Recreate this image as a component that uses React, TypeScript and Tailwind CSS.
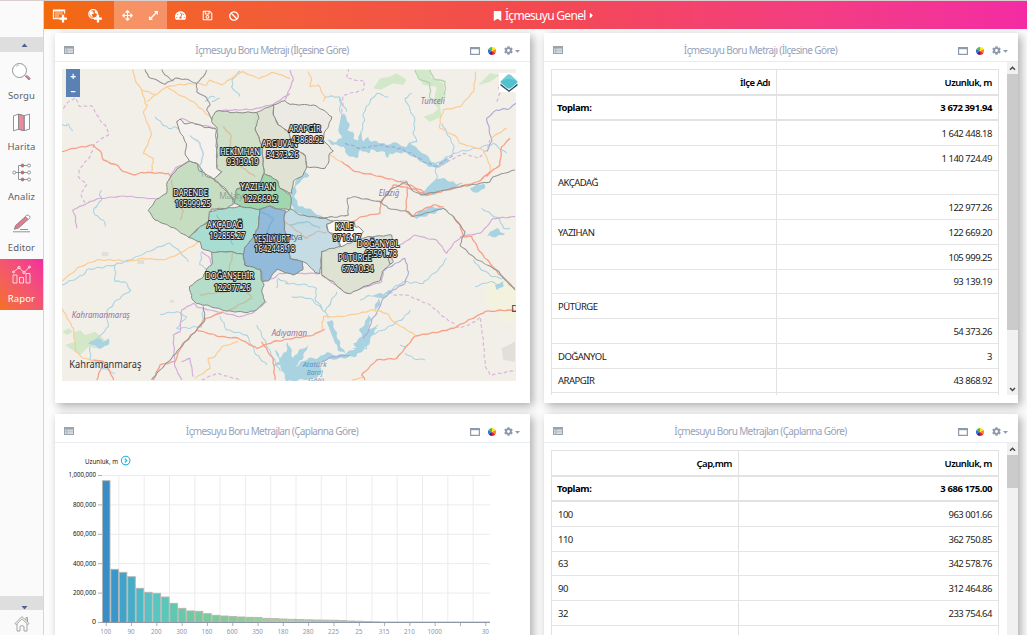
import React from "react";
import { FaTachometerAlt, FaRegSave, FaBan, FaArrowsAlt, FaBookmark, FaCog, FaCaretRight } from "react-icons/fa";

const FONT = "font-['Noto_Sans','Open_Sans',sans-serif]";

function PlusBadge() {
  return <path d="M11 6.800v7.800M7.100 10.700h7.800" stroke="#fff" strokeWidth="2.300" fill="none" />;
}

function AddTableIcon() {
  return (
    <svg width="16" height="15" viewBox="0 0 16 15">
      <path d="M1.5 3v7.5h5.5M1 2.2h11.6v3.6" stroke="#ffe9d8" strokeWidth="1.3" fill="none" />
      <path d="M3 3.6h7.6v3.2H7v3H3z" fill="#ffd3b0" opacity=".55" />
      <path d="M1 2.6h11.6" stroke="#fff" strokeWidth="1.6" />
      <PlusBadge />
    </svg>
  );
}

function AddGlobeIcon() {
  return (
    <svg width="16" height="15" viewBox="0 0 16 15">
      <circle cx="6.2" cy="6" r="4.4" stroke="#fff" strokeWidth="1.2" fill="none" />
      <path d="M3 3l3 .5 1 2-2.5 1L6 9l-2-.5-1.6-3zM8 2l2.4 2-.6 2-2-1z" fill="#fff" />
      <PlusBadge />
    </svg>
  );
}

function ExpandIcon() {
  return (
    <svg width="11" height="11" viewBox="0 0 11 11">
      <path d="M2.6 8.4l5.8-5.8" stroke="#fff" strokeWidth="1.4" />
      <path d="M6 1h4v4zM1 6v4h4z" fill="#fff" />
    </svg>
  );
}

function Toolbar() {
  return (
    <header className="flex h-[28px] shrink-0 items-center bg-linear-to-r from-[#f26a0b] via-[#f3494f] to-[#f42ba3] pt-px text-white">
      <div className="flex h-full w-[70px] items-center">
        <div className="ml-[8px] w-[35px]"><AddTableIcon /></div>
        <AddGlobeIcon />
      </div>
      <div className="-mt-px flex h-[28px] w-[53px] items-center justify-around bg-white/30 pt-px">
        <FaArrowsAlt size={11} />
        <ExpandIcon />
      </div>
      <div className="flex h-full w-[80px] items-center justify-around">
        <FaTachometerAlt size={11} />
        <FaRegSave size={11} />
        <FaBan size={10} />
      </div>
      <div className="ml-[246px] flex items-center">
        <FaBookmark className="h-[10px] w-[9px]" />
        <span className="ml-[3px] text-[12px] tracking-[-0.7px]">İçmesuyu Genel</span>
        <FaCaretRight size={9} className="ml-[1px]" />
      </div>
    </header>
  );
}

const sideIcons: Record<string, React.ReactNode> = {
  Sorgu: (
    <>
      <circle cx="8.5" cy="9.5" r="7" fill="#fff" />
      <path d="M5 5.5a5 5 0 0 1 3-1.4" opacity=".6" />
      <path d="M13.5 14.5l2 1.5" />
      <path d="M14.6 15.6l1.4-1.2 3.3 3.2-1.4 1.4z" fill="#e8788c" />
    </>
  ),
  Harita: (
    <>
      <path d="M2.5 3.8l5-1.6v15l-5 1.6zM7.5 2.2l5.5 1.5v15l-5.5-1.5zM13 3.7l5.5-1.6v15l-5.5 1.6z" fill="#fff" />
      <path d="M7.5 2.2l5.5 1.5v15l-5.5-1.5z" fill="#ee8b99" />
    </>
  ),
  Analiz: (
    <>
      <path d="M4 10.5h13M7.5 3.5v14M7.5 3.5H17M7.5 17.500H17" fill="none" />
      <circle cx="3.200" cy="10.500" r="1.500" fill="#fff" />
      <g fill="#fff"><circle cx="18" cy="3.500" r="1.500" /><circle cx="18" cy="10.500" r="1.500" /><circle cx="18" cy="17.500" r="1.500" /></g>
      <g fill="#e0566e"><circle cx="11.500" cy="3.500" r="1.500" /><circle cx="11.500" cy="10.500" r="1.500" /><circle cx="11.500" cy="17.500" r="1.500" /></g>
    </>
  ),
  Editor: (
    <>
      <path d="M4.500 12.500L14.800 3.300 17.600 6 7.300 15.200 3.300 16.300z" fill="#e8788c" />
      <path d="M14.300 3.600l1.600-1.400q1.400-.5 2.600.8 1 1.300.2 2.200l-1.500 1.300z" fill="#fff" />
      <path d="M2 18.800h17M9 16.500h8" fill="none" />
    </>
  ),
  Rapor: (
    <>
      <path d="M2 11h4v8H2zM8.500 13.500h4V19h-4zM15 9.500h4V19h-4z" fill="none" />
      <path d="M2.500 8L8 3.500l5 5L18.500 3" fill="none" />
      <circle cx="2.500" cy="8" r="1" /><circle cx="8" cy="3.500" r="1.200" /><circle cx="13" cy="8.500" r="1.200" /><circle cx="18.500" cy="3" r="1" />
    </>
  ),
};

function Sidebar() {
  return (
    <nav className="flex h-full w-[44px] shrink-0 flex-col border-r border-[#d6d6d6] bg-[#fafafa]">
      <div className="h-[36px]" />
      <div className="flex h-[15px] items-center justify-center bg-[#dedede] pl-[5px]">
        <svg width="7" height="4" viewBox="0 0 7 4"><path d="M.5 4L3.500.5 6.500 4z" fill="#53608f" /></svg>
      </div>
      <div className="mt-[4px] flex flex-col">
        {Object.keys(sideIcons).map((name) => {
          const on = name === "Rapor";
          return (
            <div
              key={name}
              className={
                on
                  ? "flex h-[51px] flex-col items-center bg-linear-to-tr from-[#f4701a] to-[#f32a9c] pt-[5px] text-white"
                  : "flex h-[50.7px] flex-col items-center pt-[5px] text-[#5b5f66]"
              }
            >
              <svg width="21" height="21" viewBox="0 0 21 21" stroke={on ? "#ffe3ea" : "#85898f"} strokeWidth=".9" fill="none">
                {sideIcons[name]}
              </svg>
              <span className="mt-[7px] text-[9.500px] leading-[13px] tracking-[0.1px]">{name}</span>
            </div>
          );
        })}
      </div>
      <div className="mt-auto flex h-[14px] items-end justify-center bg-[#dedede] pl-[5px]">
        <svg width="7" height="4" viewBox="0 0 7 4"><path d="M.5 0L3.500 3.500 6.500 0z" fill="#53608f" /></svg>
      </div>
      <div className="flex h-[25px] items-center justify-center pt-[2px]">
        <svg width="16" height="17" viewBox="0 0 16 17" stroke="#9a9a9a" strokeWidth=".9" fill="none">
          <path d="M1 8.500L8 1.500l7 7-1.200 1L8 3.800 2.200 9.500zM3 9v7h3v-4.500q2-2 4 0V16h3V9M12 5V2.500h1.500V7" />
        </svg>
      </div>
    </nav>
  );
}

function Card({ title, children }: { title: string; children: React.ReactNode }) {
  return (
    <section className="flex flex-col overflow-hidden bg-white shadow-[3px_3px_9px_rgba(0,0,0,0.32)]">
      <div className="flex h-[29px] shrink-0 items-center border-b border-[#e9edf3] pl-[9px] pr-[10px] pt-[5px]">
        <svg width="10" height="8" viewBox="0 0 10 8">
          <path d="M0 0h10v8H0z" fill="#99a4ad" />
          <path d="M1 2.500h1.500V7H1zM3.300 2.500H9V7H3.300z" fill="#d5dbe0" />
          <path d="M1 4.700h8" stroke="#a9b3bb" strokeWidth=".6" />
        </svg>
        <h2 className="flex-1 text-center text-[10px] leading-[14px] tracking-[-0.62px] text-[#98a2ba]">{title}</h2>
        <svg width="10" height="8" viewBox="0 0 10 8" className="mt-[2px]">
          <path d="M.6.6h8.800v6.800H.6z" stroke="#8e9aab" strokeWidth="1.200" fill="#fff" />
          <path d="M0 1.200h10" stroke="#8e9aab" strokeWidth="2" />
        </svg>
        <svg width="8" height="8" viewBox="0 0 8 8" className="ml-[8px] mt-[3px]">
          <path d="M4 4V0a4 4 0 0 1 3.500 2z" fill="#f8e71c" />
          <path d="M4 4l3.500-2a4 4 0 0 1 0 4z" fill="#fb8b1e" />
          <path d="M4 4l3.500 2A4 4 0 0 1 4 8z" fill="#e5252a" />
          <path d="M4 4v4A4 4 0 0 1 .5 6z" fill="#4a2290" />
          <path d="M4 4L.5 6a4 4 0 0 1 0-4z" fill="#2e6fd0" />
          <path d="M4 4L.5 2A4 4 0 0 1 4 0z" fill="#58b947" />
        </svg>
        <FaCog size={9} className="ml-[8px] mt-[2px] text-[#8e9aab]" />
        <svg width="5" height="3" viewBox="0 0 5 3" className="ml-[2px] mt-[3px]"><path d="M0 0h5L2.500 2.700z" fill="#8e9aab" /></svg>
      </div>
      {children}
    </section>
  );
}

const districts: [string, string][] = [
  ["#f4f1ef", "350,170 360,162 372,176 400,174 440,188 467,190 472,310 485,320 462,343 430,322 415,298 388,288 376,270 379,235 358,196"],
  ["#ece9e4", "640,120 675,107 690,118 760,120 790,135 815,155 806,182 792,205 790,225 820,258 809,265 805,295 795,310 740,305 735,270 700,250 685,200 655,180 640,150"],
  ["#dfe2d2", "590,142 640,120 640,150 655,180 685,200 700,250 735,270 740,305 730,330 700,348 695,385 660,370 650,345 612,325 605,240 585,190"],
  ["#cfdfc6", "457,155 465,142 480,137 520,143 590,142 597,160 585,190 605,240 612,325 600,355 560,365 530,372 524,415 515,395 490,365 462,343 485,320 470,310 472,190 455,170"],
  ["#c4dbbd", "388,288 410,295 418,318 435,325 440,335 462,343 480,360 515,395 520,418 500,430 455,432 445,470 415,490 387,518 340,488 285,465 265,437 290,402 320,385 322,350 350,312"],
  ["#a4dccf", "448,440 500,430 545,425 600,433 596,470 594,490 578,520 556,545 550,569 510,560 455,562 425,550 420,530 387,518 415,490 445,470"],
  ["#9bd5a9", "612,325 650,345 660,370 690,388 694,410 692,432 650,432 630,423 600,433 545,425 524,415 530,372 560,365 600,355"],
  ["#c2dae3", "672,445 692,432 720,450 790,460 820,468 800,478 805,500 830,520 842,545 815,560 785,560 780,625 765,622 745,600 730,590 690,580 670,490"],
  ["#8bb6d9", "600,433 630,423 650,432 675,435 672,465 678,520 690,580 728,590 728,615 700,630 650,613 635,632 625,648 608,650 602,615 555,600 550,569 556,545 578,520 594,490 596,470"],
  ["#fbfaf8", "800,478 830,466 882,469 885,485 895,485 910,500 897,520 905,535 880,540 842,545 830,510 805,500"],
  ["#d8dfd8", "905,520 930,515 995,510 1000,530 985,545 1000,590 990,597 960,560 925,560 897,530"],
  ["#dde1d1", "785,560 815,550 842,545 880,530 900,530 925,560 960,555 985,580 990,597 967,620 962,645 905,668 872,686 850,680 825,655 785,630"],
  ["#b1dbc6", "455,562 510,560 550,569 553,600 600,613 606,650 612,660 605,680 615,708 590,735 565,742 500,738 435,720 410,716 395,700 388,665 405,652 430,635 440,612 457,595"],
];

const rivers = [
  "M285 155 L305 175 325 190 350 187 390 212 420 235 430 270 420 300 428 335",
  "M6 178 20 182 25 178 38 198", "M125 375 L118 390 125 405 102 430 105 450 130 465 135 485", "M455 110 480 100", "M435 110 450 95 465 98",
  "M325 370 335 390 330 410", "M540 18 520 40 515 65 540 95", "M840 95 840 140 850 165", "M794 95 835 95 860 140",
  "M905 200 912 170 910 145 930 110 950 85 985 95", "M1055 85 1035 100 1065 165 1060 200 1070 230 1050 235",
  "M1145 175 L1180 240 1180 265 1125 300 1130 340", "M1180 265 1250 250 1300 235 1340 265", "M1265 430 1320 465 1330 490 1350 490",
  "M6 660 50 640 70 630 80 615 105 610 165 600 220 580 300 545 330 535 360 560 385 590",
  "M165 600 165 650 195 650 212 675 170 705 140 740 145 785 115 820", "M90 845 90 880 115 905 165 925",
  "M300 748 350 740 380 755 350 790 425 785 430 725", "M425 560 420 600 455 620", "M480 755 500 795 560 810 590 870 620 900",
  "M675 655 740 660 770 670 765 700 795 740 805 760", "M695 695 750 700 795 740 830 680", "M900 705 930 692 970 690 1000 670 1030 650 1090 655 1110 635 1135 615 1160 580",
  "M1240 585 1260 610 1300 635 1330 640", "M1245 665 1290 650 1320 660 1330 650", "M700 475 750 485 790 485",
  "M935 810 980 790 1030 760 1050 735", "M955 780 930 800 920 850 880 850", "M590 780 625 850 660 920", "M650 670 655 640 685 655",
  "M1020 840 1040 845", "M1035 865 1060 880 1095 885",
];

const orangeRoads = [
  "M218 13 L225 45 245 75 255 112 262 120 250 145 275 205 260 245 250 265 280 280 275 320", "M260 110 L300 80 320 65 350 60 410 55 440 60 450 45 485 60 545 20 570 30 600 40 640 22 690 40",
  "M245 75 285 88", "M320 65 L350 85 400 110 455 160 490 185 500 195 515 215 505 260 550 310 585 335", "M675 145 720 175 765 155 790 165 815 155",
  "M745 20 755 45 750 65 775 60 795 100 790 110", "M805 265 825 280 845 290", "M1248 20 1240 80 1200 125 1150 135 1140 165 1140 190 1190 215 1200 235 1270 255 1290 300 1290 320",
  "M700 360 680 335 650 330 620 340", "M6 648 60 605 110 585 170 585 200 590 250 580 310 585 350 570 420 530", "M6 730 20 755 40 790 48 860 70 880 130 890",
  "M785 795 790 755 845 755 900 745 940 735 980 745 1000 770 1065 810", "M535 830 485 845 465 875 445 880 450 910 405 940", "M1340 190 1290 220",
  "M875 945 910 938",
];
const redRoads = [
  "M6 260 L40 250 100 240 125 265 130 285 175 303 190 320 225 330 245 322 325 325 335 340",
  "M845 290 885 320 940 330 1020 350 1060 365 1090 380 1100 390", "M1350 220 1325 245 1320 300 1255 350", "M1280 335 1290 320 1255 350 1180 370 1100 390 1060 372 1000 360 985 385 962 410 960 445 905 455 870 475",
  "M1043 365 1037 435 1055 455 1075 440 1120 420 1150 425", "M1180 455 1200 480 1210 515 1235 515 1260 560 1320 630 1365 670",
  "M280 945 300 900 345 890 365 840 410 795 430 765 490 740", "M410 795 480 815 535 820 590 850 640 830 700 820 760 810 795 792",
  "M605 830 640 885 645 945", "M100 885 130 890 150 920 160 945", "M1065 813 1140 800 1180 790 1275 740 1345 735 1368 738", "M1065 813 1010 880 950 885 905 930 915 945", "M130 890 110 945",
];
const greyRoads = [
  "M255 13 265 35 295 48 315 58 345 40 375 42 410 55", "M305 13 315 30 340 48", "M410 55 430 35 440 15", "M410 55 410 80 440 98 450 120 440 135 458 165",
  "M760 460 835 455 865 450 862 400 880 395 965 412 985 430 1045 440 1060 455 1150 430 1175 450 1215 500 1200 540 1245 580 1310 615 1365 675",
  "M960 415 990 375 1040 350 1055 375 1085 390 1200 365 1290 350 1300 335 1365 315", "M430 725 435 765 410 795 350 860 335 880 290 925 275 945",
];
const purple = [
  "M50 490 L45 450 38 435 110 402 190 393 290 402", "M675 105 700 45 690 15", "M425 560 450 580 455 600", "M365 945 345 905 340 810 360 800 365 735 400 715 410 725 450 735 540 755",
  "M540 755 575 745 620 710", "M610 650 640 640 660 625 690 625 745 625 780 625", "M785 630 860 685 920 665 965 650 970 620", "M990 550 1030 535 1065 510 1100 520 1130 525 1160 565 1185 530 1215 510",
  "M365 890 390 880 400 935", "M1200 515 1260 505 1280 485 1300 460 1365 455", "M470 137 580 133 640 118 690 85", "M350 170 365 160 400 175 465 188", "M388 288 345 310 325 345",
];
const dashed = [
  "M10 130 18 118 45 98 60 125 95 122 120 165 135 180 148 207 105 235 90 275 60 310 55 335 80 360 62 385 75 420", "M845 160 850 90 910 75 915 50 860 40 865 13",
  "M1145 300 1210 265 1255 280 1280 255 1290 225", "M1310 110 1320 85 1315 60 1350 50", "M1000 690 1040 690 1110 720 1150 755 1200 790 1245 770 1260 755 1270 830 1275 900 1290 930 1320 925 1368 915",
  "M425 945 470 925 540 945",
];

const lakes = [
  "M842 158 L850 145 860 165 868 175 862 195 878 200 880 220 895 225 900 195 910 230 925 215 935 230 950 228 980 240 1000 232 1020 240 1040 245 1050 230 1075 255 1095 268 1110 285 1130 300 1150 285 1165 280 1160 295 1130 310 1100 300 1060 275 1030 262 990 265 985 280 975 262 930 255 925 265 900 255 890 280 870 275 855 260 850 245 820 240 800 225 830 230 845 220 835 195z",
  "M1130 340 L1145 340 1160 345 1185 355 1210 355 1180 370 1150 375 1120 390 1080 392 1100 368z", "M1230 368 1270 355 1275 370 1255 382 1235 378z",
  "M1060 455 1085 435 1120 425 1145 432 1130 442 1090 455 1070 462z", "M735 318 L748 330 725 345 710 360 705 400 720 425 745 430 790 460 760 460 710 445 692 420 693 385 705 350z",
  "M90 830 110 820 130 830 145 820 145 840 125 850 110 845 85 835z",
  "M642 850 650 858 658 880 668 868 678 862 684 830 695 860 698 880 715 858 740 845 750 838 735 860 725 885 705 905 745 880 765 882 790 870 800 862 830 872 862 862 890 850 880 835 905 815 900 790 915 775 925 750 935 765 922 790 952 790 935 812 930 830 910 855 890 872 850 880 800 885 775 900 785 920 765 940 680 950 668 920 662 900 640 905 658 890 650 870z",
  "M800 770 815 765 830 810 845 850 855 865 840 860 825 835z", "M940 695 955 685 970 690 990 675 1000 680 965 700z", "M940 740 955 700 960 720z",
  "M1290 500 1310 490 1320 500 1335 505 1310 515 1280 515z", "M1305 660 1325 652 1330 665 1310 675z",
];
const forests = [
  "M940 70 960 40 990 35 1010 25 1040 45 1030 60 1000 55 960 75z", "M1065 15 1110 15 1115 40 1150 55 1155 100 1135 130 1120 115 1130 65 1090 60z",
  "M1090 155 1120 145 1140 125 1145 155 1110 170z", "M1255 60 1290 25 1320 30 1290 50z", "M40 805 60 795 75 810 105 800 135 825 110 850 85 845 60 870 15 840 45 830z", "M8 800 25 790 40 800 20 810z",
];

const mapLabels: [string, string, number, number, number, number, number][] = [
  ["HEKİMHAN", "93139.19", 540, 261, 120, 293, 96],
  ["ARGUVAN", "54373.26", 659, 239, 108, 270, 97],
  ["ARAPGİR", "43868.92", 734, 192, 96, 225, 96],
  ["DARENDE", "105999.25", 392, 385, 104, 417, 108],
  ["YAZIHAN", "122669.2", 594, 367, 106, 402, 104],
  ["AKÇADAĞ", "192855.27", 494, 480, 106, 514, 108],
  ["YEŞİLYURT", "1642448.18", 636, 522, 108, 554, 122],
  ["KALE", "9716.17", 853, 487, 55, 521, 84],
  ["DOĞANYOL", "62591.78", 955, 538, 126, 568, 97],
  ["PÜTÜRGE", "67210.34", 885, 580, 100, 614, 95],
  ["DOĞANŞEHİR", "122977.26", 509, 635, 146, 669, 110],
];

function meander(line: string, amount: number) {
  const n = (line.match(/[\d.]+/g) || []).map(Number);
  let d = `M${n[0]} ${n[1]}`;
  let side = 1;
  for (let i = 2; i < n.length; i += 2) {
    const x0 = n[i - 2], y0 = n[i - 1], x1 = n[i], y1 = n[i + 1];
    const len = Math.hypot(x1 - x0, y1 - y0) || 1;
    const parts = Math.max(1, Math.round(len / 16));
    for (let k = 1; k <= parts; k++) {
      const t = k / parts, m = (k - 0.5) / parts;
      const a = amount * side * (0.5 + ((i * 7 + k * 5) % 9) / 9);
      side = -side;
      const cx = x0 + (x1 - x0) * m - ((y1 - y0) / len) * a;
      const cy = y0 + (y1 - y0) * m + ((x1 - x0) / len) * a;
      d += `Q${cx.toFixed(1)} ${cy.toFixed(1)} ${(x0 + (x1 - x0) * t).toFixed(1)} ${(y0 + (y1 - y0) * t).toFixed(1)}`;
    }
  }
  return d;
}

function Lines({ d, stroke, w, dash, bend = 3 }: { d: string[]; stroke: string; w: number; dash?: string; bend?: number }) {
  return <path d={d.map((l) => meander(l, bend)).join(" ")} stroke={stroke} strokeWidth={w} strokeDasharray={dash} fill="none" strokeLinejoin="round" />;
}

function MapView() {
  return (
    <div className="relative ml-[7px] mt-[7px] h-[312px] w-[454px]">
      <svg width="454" height="312" viewBox="6 12 1362 936" className={FONT}>
        <rect x="6" y="12" width="1362" height="936" fill="#f2efe9" />
        <path d={forests.join(" ")} fill="#d3e7c9" />
        <path d="M1280 640h60l28 40v90h-40l-50-60z" fill="#f3f3d8" opacity=".6" />
        <path d="M1325 850l40-20v60l-35-5z M125 560h20v14h-20z M232 585h20v12h-20z M330 705h12v8h-12z M1020 345h22v14h-22z" fill="#e2dfda" />
        <Lines d={rivers} stroke="#a9d3e2" w={3.200} bend={4} />
        <path d={lakes.map((l) => meander(l, 5) + "Z").join(" ")} fill="#a9d3e0" />
        <Lines d={["M855 235 L900 250 960 240 1020 250 1060 270 1100 295 1130 303 1180 270"]} stroke="#9fa9d3" w={3.500} dash="12 6" />
        <Lines d={["M965 620 1000 600 1035 580 1045 620 1035 655 1000 675 970 700 950 745 935 765 925 800 910 820", "M1280 260 1295 230 1280 160 1310 135 1350 130 1368 115", "M785 890 820 875 870 870"]} stroke="#a9acd6" w={3.500} />
        <Lines d={purple} stroke="#d3acd8" w={3.500} bend={2} />
        <Lines d={dashed} stroke="#d8b4db" w={3.500} dash="11 7" bend={2} />
        <Lines d={["M1065 15 1075 40 1110 55 1110 100 1130 110", "M1110 15 1120 40 1155 50 1155 90"]} stroke="#b4d4b0" w={4} />
        <Lines d={orangeRoads} stroke="#fbcb90" w={3.500} bend={2.500} />
        <Lines d={redRoads} stroke="#f7a088" w={4} bend={2.500} />
        <Lines d={greyRoads} stroke="#969696" w={3.200} bend={2.500} />
        {districts.map(([fill, pts], i) => (
          <path key={i} d={meander(pts, 2.500) + "Z"} fill={fill} fillOpacity=".93" stroke="#888a86" strokeWidth="3" strokeLinejoin="round" />
        ))}
        <g opacity=".35">
          <Lines d={["M335 345 340 400 370 440 360 465", "M490 185 515 215 505 260 550 310 585 335", "M675 470 740 520 770 500 800 502", "M420 690 500 680 540 650 575 700 500 740", "M520 560 500 640"]} stroke="#d88a5a" w={4} />
          <Lines d={["M390 212 420 235 430 270 420 300 428 335", "M605 440 640 460 620 500 665 560", "M690 480 740 470 780 490", "M470 450 500 500 520 540"]} stroke="#4f9dbb" w={4} />
        </g>
        <g fontStyle="italic" fill="#9470a3" fontSize="25">
          <text x="1082" y="116" textLength="72" lengthAdjust="spacingAndGlyphs">Tunceli</text>
          <text x="956" y="394" textLength="62" lengthAdjust="spacingAndGlyphs">Elazığ</text>
          <text x="35" y="760" textLength="175" lengthAdjust="spacingAndGlyphs">Kahramanmaraş</text>
          <text x="635" y="814" textLength="106" lengthAdjust="spacingAndGlyphs">Adıyaman</text>
          <g fill="#5f92bd" fontSize="22">
            <text x="728" y="906" textLength="72" lengthAdjust="spacingAndGlyphs">Atatürk</text>
            <text x="740" y="931" textLength="48" lengthAdjust="spacingAndGlyphs">Baraj</text>
            <text x="744" y="955" textLength="48" lengthAdjust="spacingAndGlyphs">Gölü</text>
          </g>
        </g>
        <g fill="#545454">
          <text x="28" y="909" fontSize="31" fill="#333" textLength="216" lengthAdjust="spacingAndGlyphs">Kahramanmaraş</text>
          <text x="478" y="403" fontSize="25" fill="#97a392" textLength="84">Malatya</text>
          <text x="638" y="524" fontSize="28" fill="#68747c" textLength="90">Malatya</text>
          <text x="1354" y="741" fontSize="28" fill="#333">D</text>
        </g>
        <g textAnchor="middle" fontSize="25" fill="#fff" stroke="#222" strokeWidth="6.500" strokeLinejoin="round" style={{ paintOrder: "stroke" }}>
          {mapLabels.map(([name, value, x, y, w, y2, w2]) => (
            <g key={name}>
              <text x={x + (name === "DARENDE" ? 6 : 8)} y={y2 + 8} textLength={w2} lengthAdjust="spacingAndGlyphs">{value}</text>
              <text x={x} y={y + 8} textLength={w} lengthAdjust="spacingAndGlyphs">{name}</text>
            </g>
          ))}
        </g>
      </svg>
      <div className="absolute left-[4px] top-0 flex h-[28px] w-[14px] flex-col items-center justify-around bg-[#5b80b4] text-[10px] font-bold leading-[13px] text-white">
        <span>+</span>
        <span>–</span>
      </div>
      <svg width="20" height="20" viewBox="0 0 20 20" className="absolute left-[437px] top-[4px]">
        <rect x="0" y="0" width="17" height="19" fill="#fff" />
        <path d="M1.500 10.500L10 17.200l8.500-6.700v2L10 19 1.500 12.500z" fill="#2b5166" />
        <path d="M10 1.200q1 0 2 1l6 5.500q1.500 1.300 0 2.600l-6 5q-2 1.500-4 0l-6-5q-1.500-1.300 0-2.600l6-5.500q1-1 2-1z" fill="#50c1cd" stroke="#fff" strokeWidth=".5" />
        <path d="M2 8.500Q8 4 18 8L12 2.200q-2-1.500-4 0z" fill="#73d0d9" />
      </svg>
    </div>
  );
}

const barTops = [480.7, 569.3, 572.3, 576.7, 588.3, 592.3, 593.3, 597, 603.3, 608.3, 610.9, 611.3, 613.7, 615.3, 616, 616.4, 617, 617.3, 617.4, 618.3, 618.6, 619, 619.3, 619.5, 619.8, 620, 620.1, 620.2, 620.5, 621, 621.2, 621.5, 621.8, 622, 622, 622, 622, 622, 622, 622, 622, 622, 622, 622, 622, 622];
const barColors = ["#378dc5", "#3b97c9", "#3fa3ca", "#46adc9", "#4cb9c6", "#55c3c3", "#56c8c0", "#59c7ba", "#62c7b0", "#69c8a9", "#70c9a4", "#75ca9f", "#79ca9d", "#7dcb9b", "#81cb9a", "#86cc99", "#8ccc9a", "#92cd9a", "#98cd9c", "#9ecd9e", "#a4cea2", "#aacfa7", "#aecfab", "#b0ccae", "#b2c9b1"];
const xLabels = ["100", "90", "200", "300", "160", "600", "350", "180", "280", "225", "25", "315", "210", "1000", "", "30"];
const yLabels = ["1,000,000", "800,000", "600,000", "400,000", "200,000", "0"];
const STEP = 388 / 46;

function Chart() {
  return (
    <svg width="475" height="200" viewBox="55 443 475 200" className={"shrink-0 " + FONT}>
      <text x="85" y="463.500" fontSize="7.500" fill="#222" textLength="33" lengthAdjust="spacingAndGlyphs">Uzunluk, m</text>
      <circle cx="125.700" cy="460.600" r="4.300" fill="#fff" stroke="#21b4de" strokeWidth="1.100" />
      <path d="M124.800 458.700l2 1.900-2 1.900" stroke="#21b4de" strokeWidth="1.200" fill="none" />
      {yLabels.map((t, i) => {
        const y = 475.500 + i * 29.400;
        return (
          <g key={t}>
            <path d={`M102 ${y}H490`} stroke="#ececec" />
            <path d={`M98 ${y}h4`} stroke="#a8b0c4" />
            <text x="96" y={y + 1.800} fontSize="7" fill="#111" textAnchor="end" textLength={[27.500, 23, 23, 23, 23, 4][i]} lengthAdjust="spacingAndGlyphs">{t}</text>
          </g>
        );
      })}
      {xLabels.slice(0, 15).map((_, i) => (
        <path key={i} d={`M${102 + STEP * (2 + 3 * i)} 475V622`} stroke="#ececec" />
      ))}
      {barTops.map((top, i) => (
        <rect key={i} x={102 + STEP * i + 0.400} y={top} width={7.600} height={622.500 - top} fill={barColors[i] || "#b2c4b4"} stroke="#b9b5b2" strokeWidth=".9" />
      ))}
      <path d="M102 622.500H490" stroke="#8f97a5" />
      {xLabels.map((t, i) => {
        const x = 102 + STEP * (0.500 + 3 * i);
        return (
          <g key={i}>
            <path d={`M${x} 623v3`} stroke="#a8b0c4" />
            <text x={x - 0.500} y="633.500" fontSize="7" fill="#8b95b1" textAnchor="middle" textLength={t.length * 3.600} lengthAdjust="spacingAndGlyphs">{t}</text>
          </g>
        );
      })}
    </svg>
  );
}

type Row = [string, string];

function DataTable({ head, total, rows, split }: { head: Row; total: string; rows: Row[]; split: string }) {
  const right = "flex flex-1 items-center justify-end pr-[6px]";
  return (
    <div className="ml-[7px] mt-[7px] flex w-[448px] shrink-0 flex-col self-start border-x border-t border-[#e2e2e2] text-[9.500px] tracking-[-0.5px] text-[#222]">
      <div className="flex h-[25.500px] shrink-0 border-b-2 border-[#e2e2e2] font-semibold tracking-[-0.5px] text-black">
        <div className={"flex items-center justify-end border-r border-[#e2e2e2] pr-[6px] pt-[3px] " + split}>{head[0]}</div>
        <div className={right + " pt-[3px]"}>{head[1]}</div>
      </div>
      <div className="flex h-[25.500px] shrink-0 border-b-2 border-[#e2e2e2] font-bold tracking-[-0.4px] text-black">
        <div className={"flex items-center border-r border-[#e2e2e2] pl-[5px] pt-[2px] " + split}>Toplam:</div>
        <div className={right + " pt-[2px]"}>{total}</div>
      </div>
      {rows.map(([a, b], i) => (
        <div key={i} className="flex h-[24.750px] shrink-0 border-b border-[#e4e4e4]">
          <div className={"flex items-center border-r border-[#e2e2e2] pl-[6px] pt-[2px] " + split}>{a}</div>
          <div className={right + " pt-[2px]"}>{b}</div>
        </div>
      ))}
    </div>
  );
}

function Scroll({ children, thumb, end, height }: { children: React.ReactNode; thumb: string; end: boolean; height: string }) {
  return (
    <div className={"flex justify-between overflow-hidden " + height}>
      {children}
      <div className="flex w-[11px] flex-col items-center bg-[#f1f1f1]">
        <svg width="11" height="12" viewBox="0 0 11 12" className="shrink-0"><path d="M3 7.800l2.500-2.600L8 7.800" stroke="#444" strokeWidth="1.400" fill="none" /></svg>
        <div className={"w-full shrink-0 bg-[#cbcbcb] " + thumb} />
        {end && <svg width="11" height="12" viewBox="0 0 11 12" className="mt-auto shrink-0"><path d="M3 5l2.500 2.600L8 5" stroke="#444" strokeWidth="1.400" fill="none" /></svg>}
      </div>
    </div>
  );
}

const byDistrict: Row[] = [
  ["", "1 642 448.18"], ["", "1 140 724.49"], ["AKÇADAĞ", ""], ["", "122 977.26"], ["YAZIHAN", "122 669.20"], ["", "105 999.25"],
  ["", "93 139.19"], ["PÜTÜRGE", ""], ["", "54 373.26"], ["DOĞANYOL", "3"], ["ARAPGİR", "43 868.92"], ["", ""],
];
const byDiameter: Row[] = [["100", "963 001.66"], ["110", "362 750.85"], ["63", "342 578.76"], ["90", "312 464.86"], ["32", "233 754.64"], ["", ""]];

export default function App() {
  return (
    <div className={"flex h-[635px] w-[1027px] flex-col overflow-hidden border-t border-[#d9cfcf] bg-[#fcfcfc] " + FONT}>
      <div className="flex min-h-0 flex-1">
        <Sidebar />
        <div className="flex min-w-0 flex-1 flex-col">
          <Toolbar />
          <main className="grid min-h-0 flex-1 grid-cols-[475px_474px] grid-rows-[370px_260px] gap-x-[14px] gap-y-[11px] overflow-hidden pl-[11px] pt-[4px]">
            <Card title="İçmesuyu Boru Metrajı (İlçesine Göre)">
              <MapView />
            </Card>
            <Card title="İçmesuyu Boru Metrajı (İlçesine Göre)">
              <Scroll thumb="h-[256px]" end height="h-[333px]">
                <DataTable head={["İlçe Adı", "Uzunluk, m"]} total="3 672 391.94" rows={byDistrict} split="w-[225px]" />
              </Scroll>
            </Card>
            <Card title="İçmesuyu Boru Metrajları (Çaplarına Göre)">
              <Chart />
            </Card>
            <Card title="İçmesuyu Boru Metrajları (Çaplarına Göre)">
              <Scroll thumb="h-[33px]" end={false} height="h-[231px]">
                <DataTable head={["Çap,mm", "Uzunluk, m"]} total="3 686 175.00" rows={byDiameter} split="w-[187px]" />
              </Scroll>
            </Card>
          </main>
        </div>
      </div>
    </div>
  );
}
